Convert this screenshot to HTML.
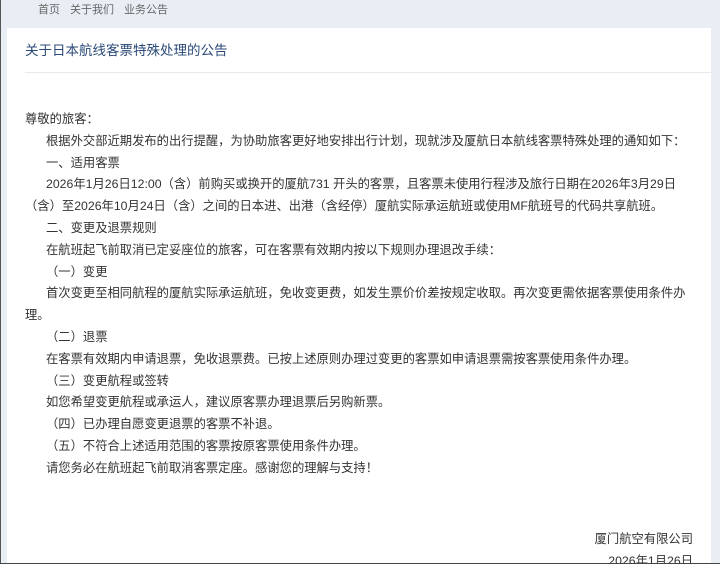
<!DOCTYPE html>
<html><head><meta charset="utf-8"><style>
html,body{margin:0;padding:0;overflow:hidden}
body{width:720px;height:564px;overflow:hidden;background:#e9eef5;font-family:"Liberation Sans","Noto Sans CJK SC",sans-serif;position:relative}
.lb{position:absolute;left:0;top:0;width:1px;height:564px;background:#555}
.bb{position:absolute;left:0;top:563px;width:720px;height:1px;background:#444}
.nav{position:absolute;top:3px;left:38px;font-size:11px;color:#666;line-height:14px;white-space:nowrap}
.nav span{margin-right:10px}
.panel{position:absolute;left:7px;top:28px;width:704px;height:536px;background:#fff}
.title{position:absolute;left:25px;top:42px;font-size:13.5px;color:#2b4a78;line-height:18px;white-space:nowrap}
.sep{position:absolute;left:25px;top:72px;width:686px;height:1px;background:#e6e9ee}
.body{position:absolute;left:25px;top:109px;font-size:12.3px;color:#333;line-height:21.8px;white-space:nowrap}
.i{padding-left:21px}
.sign{position:absolute;right:27px;top:529px;font-size:12.3px;color:#333;line-height:21.5px;text-align:right;white-space:nowrap}
</style></head><body>
<div class="nav"><span>首页</span><span>关于我们</span><span>业务公告</span></div>
<div class="panel"></div>
<div class="title">关于日本航线客票特殊处理的公告</div>
<div class="sep"></div>
<div class="body">
<div>尊敬的旅客：</div>
<div class="i">根据外交部近期发布的出行提醒，为协助旅客更好地安排出行计划，现就涉及厦航日本航线客票特殊处理的通知如下：</div>
<div class="i">一、适用客票</div>
<div class="i">2026年1月26日12:00（含）前购买或换开的厦航731 开头的客票，且客票未使用行程涉及旅行日期在2026年3月29日</div>
<div>（含）至2026年10月24日（含）之间的日本进、出港（含经停）厦航实际承运航班或使用MF航班号的代码共享航班。</div>
<div class="i">二、变更及退票规则</div>
<div class="i">在航班起飞前取消已定妥座位的旅客，可在客票有效期内按以下规则办理退改手续：</div>
<div class="i">（一）变更</div>
<div class="i">首次变更至相同航程的厦航实际承运航班，免收变更费，如发生票价价差按规定收取。再次变更需依据客票使用条件办</div>
<div>理。</div>
<div class="i">（二）退票</div>
<div class="i">在客票有效期内申请退票，免收退票费。已按上述原则办理过变更的客票如申请退票需按客票使用条件办理。</div>
<div class="i">（三）变更航程或签转</div>
<div class="i">如您希望变更航程或承运人，建议原客票办理退票后另购新票。</div>
<div class="i">（四）已办理自愿变更退票的客票不补退。</div>
<div class="i">（五）不符合上述适用范围的客票按原客票使用条件办理。</div>
<div class="i">请您务必在航班起飞前取消客票定座。感谢您的理解与支持！</div>
</div>
<div class="sign"><div>厦门航空有限公司</div><div>2026年1月26日</div></div>
<div class="lb"></div><div class="bb"></div>
</body></html>
